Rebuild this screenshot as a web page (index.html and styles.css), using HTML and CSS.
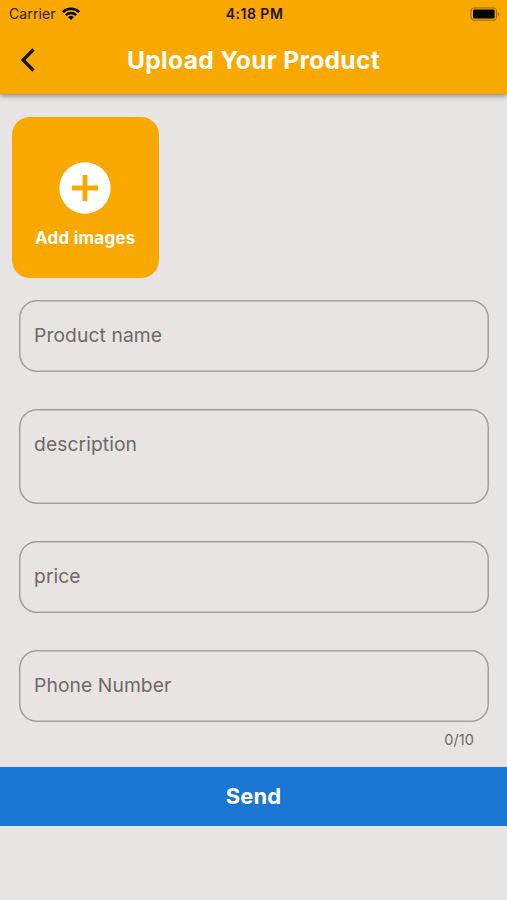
FILE: index.html
```html
<!DOCTYPE html>
<html lang="en">
<head>
<meta charset="utf-8">
<title>Upload Your Product</title>
<link rel="stylesheet" href="styles.css">
</head>
<body>
<header class="header">
  <div class="status">
    <div class="carrier"><span>Carrier</span>
      <svg class="wifi" viewBox="0 0 18 13"><path d="M0 4.200a13 13 0 0 1 18 0L16.300 6a10.500 10.500 0 0 0-14.600 0zM3 7.300a8.500 8.500 0 0 1 12 0L13.300 9a6 6 0 0 0-8.600 0zM6 10.300a4.300 4.300 0 0 1 6 0L9 13z"/></svg>
    </div>
    <span class="time">4:18 PM</span>
    <svg class="battery" viewBox="0 0 30 14"><rect x="1" y=".8" width="25.500" height="12.400" rx="3.500" fill="none" stroke="#a87108" stroke-width="1.300"/><rect x="3" y="2.600" width="21.600" height="8.800" rx="1.500"/><path d="M27.800 4.500q3 2.500 0 5z" fill="#a87108"/></svg>
  </div>
  <div class="bar">
    <svg class="back" viewBox="0 0 16 24"><path d="M13.500 1.500 3 12l10.500 10.500"/></svg>
    <h1>Upload Your Product</h1>
  </div>
</header>
<main>
  <button class="add">
    <svg class="plus" viewBox="0 0 52 52"><circle cx="26" cy="26" r="25.700"/><path d="M26 13v26M13 26h26"/></svg>
    <span>Add images</span>
  </button>
  <form class="form">
    <div class="field">Product name</div>
    <div class="field tall">description</div>
    <div class="field">price</div>
    <div class="field">Phone Number</div>
    <div class="count">0/10</div>
  </form>
  <button class="send">Send</button>
</main>
</body>
</html>
```
FILE: styles.css
```css
* { box-sizing: border-box; }
body { margin: 0; height: 900px; background: #e8e4e3; font-family: Inter, "Liberation Sans", sans-serif; overflow: hidden; }
button { border: 0; padding: 0; font: inherit; color: #fff; }
.header { height: 94px; background: #f9a800; box-shadow: 0 2px 5px rgba(0,0,0,.4); }
.status { height: 27px; display: grid; grid-template-columns: 1fr auto 1fr; align-items: center; padding: 0 7px 0 9px; font-size: 14px; color: #2b1d00; }
.carrier { display: flex; align-items: center; gap: 6px; letter-spacing: .1px; }
.wifi { width: 18px; height: 13px; fill: #000; }
.time { font-weight: 600; letter-spacing: .5px; color: #1c1300; }
.battery { width: 30px; height: 14px; justify-self: end; }
.bar { height: 65px; display: grid; grid-template-columns: 40px 1fr 40px; align-items: center; }
.back { width: 16px; height: 24px; margin-left: 20px; fill: none; stroke: #17130a; stroke-width: 3.200; }
h1 { margin: 0; text-align: center; color: #fff; font-size: 24.600px; line-height: 30px; font-weight: 700; letter-spacing: .3px; white-space: nowrap; }
.add { display: flex; flex-direction: column; align-items: center; width: 146.500px; height: 161px; margin: 23px 0 0 12px; padding-top: 44.500px; border-radius: 18px; background: #f9a800; font-size: 17px; font-weight: 700; line-height: 22px; letter-spacing: .24px; }
.plus { width: 52px; height: 52px; margin-bottom: 13px; fill: #fff; stroke: none; }
.plus path { stroke: #f9a800; stroke-width: 4.800; }
.form { margin: 22px 18px 0 19px; }
.field { height: 72px; margin-bottom: 37px; padding: 22.500px 15px; box-shadow: inset 0 0 0 1.500px #a29f9e; border-radius: 18px; color: #6d6a69; font-size: 19.300px; line-height: 25px; letter-spacing: .08px; }
.tall { height: 95px; }
.count { margin: -29px 15px 0; text-align: right; color: #6d6a69; font-size: 14.500px; line-height: 20px; letter-spacing: .1px; }
.send { display: block; width: 100%; height: 58.500px; margin-top: 17px; background: #1976d2; font-size: 22px; font-weight: 700; letter-spacing: .1px; }
```
